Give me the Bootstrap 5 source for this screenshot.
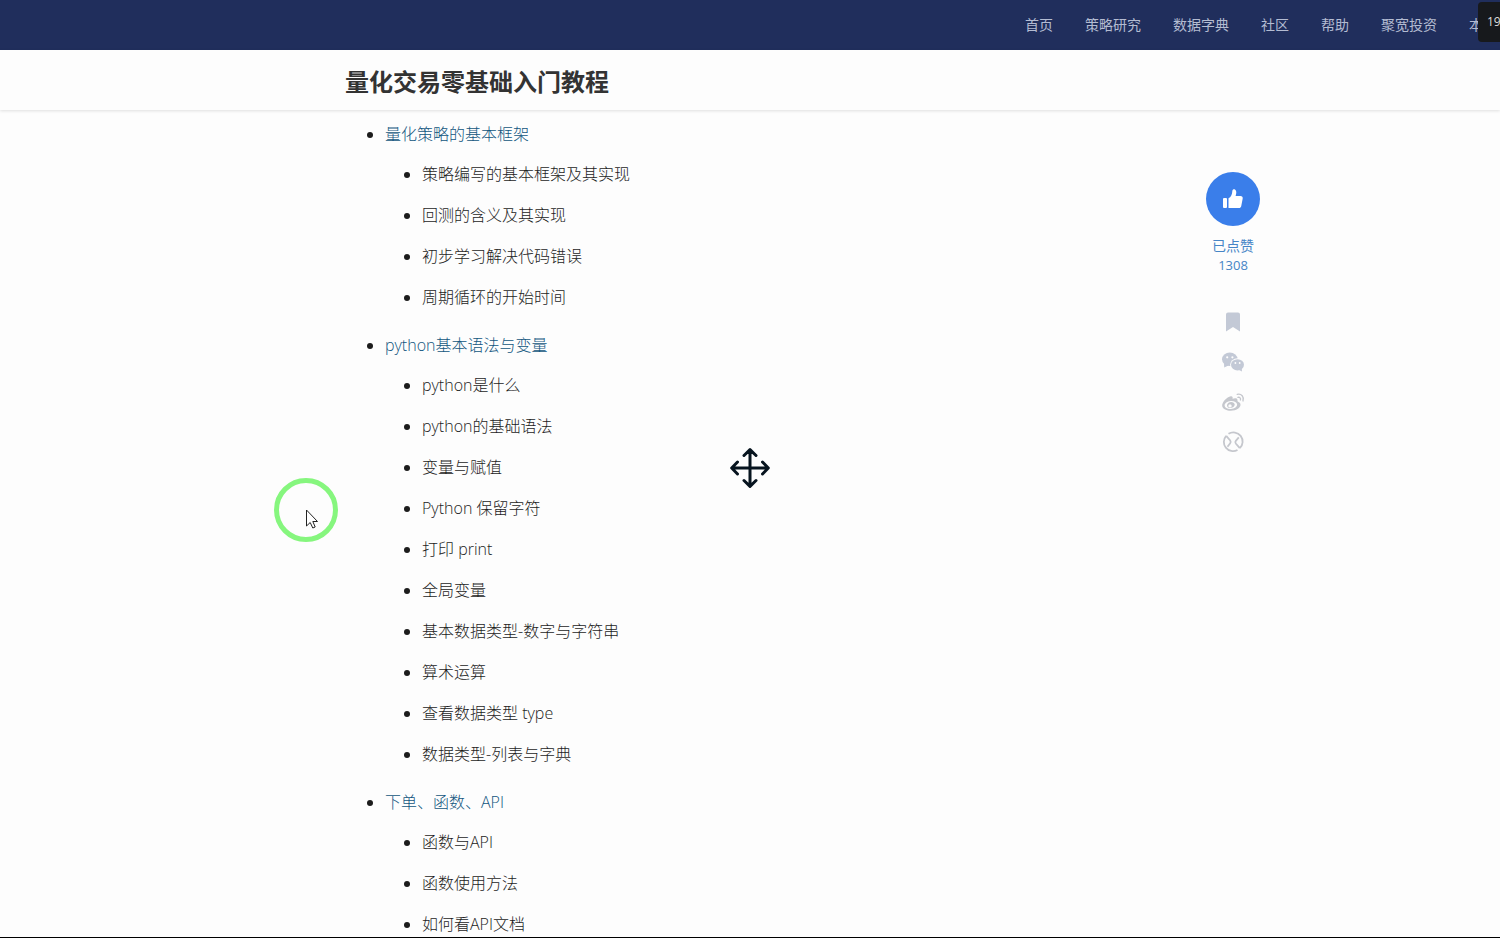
<!DOCTYPE html>
<html lang="zh-CN">
<head>
<meta charset="utf-8">
<meta name="viewport" content="width=device-width, initial-scale=1">
<title>量化交易零基础入门教程</title>
<link href="https://cdn.jsdelivr.net/npm/bootstrap@5.3.0/dist/css/bootstrap.min.css" rel="stylesheet">
<style>
  body { font-family: "Open Sans", "Noto Sans CJK SC", sans-serif; font-size: 16px; line-height: 25px; color: #333; background: #fdfdfd; border-bottom: 1px solid #000; }
  a { text-decoration: none; }
  .topbar { height: 50px; padding: 0 17px 2px 0; background: #202e5c; }
  .topbar .nav { gap: 32px; font-size: 14px; }
  .topbar .nav-link { padding: 0; color: #b4bcd2; }
  .topbar .nav-link:hover { color: #fff; }
  .clock-tag { top: 2px; right: 0; width: 22px; height: 40px; padding-left: 9px; background: #17191c; color: #ddd; font-size: 12px; line-height: 40px; border-radius: 4px 0 0 4px; }
  .page-grid { display: grid; grid-template-columns: 1fr minmax(0, 810px) 1fr; }
  .page-grid > .middle { grid-column: 2; }
  .titlebar { height: 60px; box-shadow: 0 1px 3px rgba(0, 0, 0, .12); z-index: 1; }
  .titlebar h1 { font-size: 24px; line-height: 64px; }
  .outline { padding: 12px 0 0 40px; font-weight: 300; color: #1c1c1c; }
  .outline > li { margin-bottom: 23px; }
  .outline > li > a { color: #125680; }
  .outline ul { margin-top: 15px; padding-left: 37px; list-style: disc; }
  .rail { width: 54px; margin: 62px 0 0 51px; }
  .like-btn { width: 54px; height: 54px; background: #3a7eea; }
  .liked { margin-top: 10px; color: #4685c6; font-size: 14px; line-height: 20px; white-space: nowrap; }
  .liked .count { font-size: 13px; line-height: 19px; }
  .share { margin-top: 35px; gap: 16px; color: #c3c9d6; }
  .share a { color: inherit; height: 24px; }
  .share svg, .like-btn svg { display: block; }
  .move-mark { top: 50%; left: 50%; margin: -21px 0 0 -20px; }
  .pointer { left: 274px; top: 478px; }
  .pointer, .move-mark { pointer-events: none; }
</style>
</head>
<body class="vh-100 d-flex flex-column overflow-hidden">
<header class="topbar position-relative d-flex align-items-center justify-content-end flex-shrink-0">
  <nav class="nav flex-nowrap text-nowrap" aria-label="主导航">
    <a class="nav-link" href="#">首页</a>
    <a class="nav-link" href="#">策略研究</a>
    <a class="nav-link" href="#">数据字典</a>
    <a class="nav-link" href="#">社区</a>
    <a class="nav-link" href="#">帮助</a>
    <a class="nav-link" href="#">聚宽投资</a>
    <a class="nav-link" href="#">本</a>
  </nav>
  <div class="clock-tag position-absolute overflow-hidden">19</div>
</header>
<div class="titlebar page-grid position-relative flex-shrink-0">
  <h1 class="middle fw-bold m-0">量化交易零基础入门教程</h1>
</div>
<main class="page-grid flex-fill overflow-hidden align-items-start">
  <ul class="middle outline mb-0">
    <li><a href="#">量化策略的基本框架</a>
      <ul class="d-grid gap-3">
        <li>策略编写的基本框架及其实现</li>
        <li>回测的含义及其实现</li>
        <li>初步学习解决代码错误</li>
        <li>周期循环的开始时间</li>
      </ul>
    </li>
    <li><a href="#">python基本语法与变量</a>
      <ul class="d-grid gap-3">
        <li>python是什么</li>
        <li>python的基础语法</li>
        <li>变量与赋值</li>
        <li>Python 保留字符</li>
        <li>打印 print</li>
        <li>全局变量</li>
        <li>基本数据类型-数字与字符串</li>
        <li>算术运算</li>
        <li>查看数据类型 type</li>
        <li>数据类型-列表与字典</li>
      </ul>
    </li>
    <li><a href="#">下单、函数、API</a>
      <ul class="d-grid gap-3">
        <li>函数与API</li>
        <li>函数使用方法</li>
        <li>如何看API文档</li>
      </ul>
    </li>
  </ul>
  <aside class="rail d-flex flex-column align-items-center">
    <button type="button" class="like-btn btn border-0 rounded-circle p-0 d-flex align-items-center justify-content-center" aria-label="点赞">
      <svg width="20" height="20" viewBox="0 0 20 20" fill="#fff"><rect x="0" y="9" width="4" height="10" rx="1"/><path d="M5.500 9.300C8 8 9.200 5.500 9.300 2.200C9.400 .4 11 0 12 .6C13.900 1.900 13.400 4.600 12.600 7H17.500C19 7 20 8 19.700 9.600L18.200 17.200C17.900 18.400 17.200 19 16 19H5.500Z"/></svg>
    </button>
    <div class="liked text-center">已点赞<div class="count">1308</div></div>
    <div class="share d-flex flex-column align-items-center">
      <a href="#" aria-label="收藏"><svg width="24" height="24" viewBox="0 0 24 24" fill="currentColor"><path d="M7 2.500H17Q19 2.500 19 4.500V21.500L12 17L5 21.500V4.500Q5 2.500 7 2.500Z"/></svg></a>
      <a href="#" aria-label="微信"><svg width="24" height="24" viewBox="0 0 24 24"><g fill="currentColor"><ellipse cx="8.800" cy="9.300" rx="7.800" ry="6.700"/><path d="M3 13L3.200 17.500L8 15.200Z"/></g><ellipse cx="16.500" cy="14.800" rx="7.400" ry="6.500" fill="#fdfdfd"/><g fill="currentColor"><ellipse cx="16.500" cy="14.800" rx="6.500" ry="5.600"/><path d="M17 19.500L21 21.500L20.700 17.500Z"/></g><g fill="#fdfdfd"><circle cx="6.200" cy="7.300" r="1.100"/><circle cx="11.400" cy="7.300" r="1.100"/><circle cx="14.400" cy="13" r=".9"/><circle cx="18.700" cy="13" r=".9"/></g></svg></a>
      <a href="#" aria-label="微博"><svg width="24" height="24" viewBox="0 0 24 24"><path fill="#c5c7cd" fill-rule="evenodd" d="M9.800 6.200C11.500 6 12 7.300 11.500 8.800C13.500 8 16.900 7.700 16.500 10.600C16.400 11.200 16.400 11.600 17.500 12C20.500 13.200 20 16.500 17.300 18.500C12.500 22 2.500 21.300 1.200 16.200C.5 12.500 6 6.700 9.800 6.200ZM9.800 10.900C6.200 11.100 3.500 13.100 3.600 15.500C3.700 17.900 6.700 19.200 10 18.900C13.600 18.600 16.300 16.600 16.100 14.200C15.900 12 13.100 10.700 9.800 10.900Z"/><path fill="#c5c7cd" fill-rule="evenodd" d="M10.300 11.900C7.800 11.900 5.900 13.500 6 15.400C6.100 17.200 7.800 18.300 9.800 18C12.100 17.700 13.900 16.200 13.700 14.300C13.500 12.800 12.100 11.900 10.300 11.900ZM9 14.200A1.700 1.700 0 1 1 9 17.600A1.700 1.700 0 1 1 9 14.200Z"/><g fill="none" stroke="#c5c7cd" stroke-width="1.300" stroke-linecap="round"><path d="M16.200 4.300C20.500 3.300 23.300 7 22 11"/><path d="M16.900 7.300C18.800 6.900 20 8.300 19.400 10"/></g></svg></a>
      <a href="#" aria-label="更多分享"><svg width="24" height="24" viewBox="0 0 24 24" fill="none" stroke="#c5c7cd" stroke-width="1.800"><path d="M7.500 3.800A9.200 9.200 0 0 1 18.800 18.200M16.500 20A9.200 9.200 0 0 1 5.200 5.800"/><path d="M5.200 5.800L9.200 10.500Q10.200 12 9.200 13.200L6.500 16.800M17.800 7.300L14.800 10.800Q13.800 12 14.800 13.500L18.800 18.200"/></svg></a>
    </div>
  </aside>
</main>
<svg class="move-mark position-fixed" width="40" height="40" viewBox="0 0 40 40" fill="none" stroke="#07141f" stroke-width="3" stroke-linecap="round" stroke-linejoin="round" aria-hidden="true"><path d="M20 2V38M2 20H38M14 7.500L20 1.700L26 7.500M14 32.500L20 38.300L26 32.500M7.500 14L1.700 20L7.500 26M32.500 14L38.300 20L32.500 26"/></svg>
<svg class="pointer position-fixed" width="64" height="64" viewBox="0 0 64 64" aria-hidden="true"><circle cx="32" cy="32" r="29.500" fill="none" stroke="#86f67e" stroke-width="5"/><path d="M32.500 32V48L36.200 44.500L38.800 50L41.200 49L38.800 43.500H43.500Z" fill="#fff" stroke="#222" stroke-width="1"/></svg>
<script src="https://cdn.jsdelivr.net/npm/bootstrap@5.3.0/dist/js/bootstrap.bundle.min.js"></script>
</body>
</html>
